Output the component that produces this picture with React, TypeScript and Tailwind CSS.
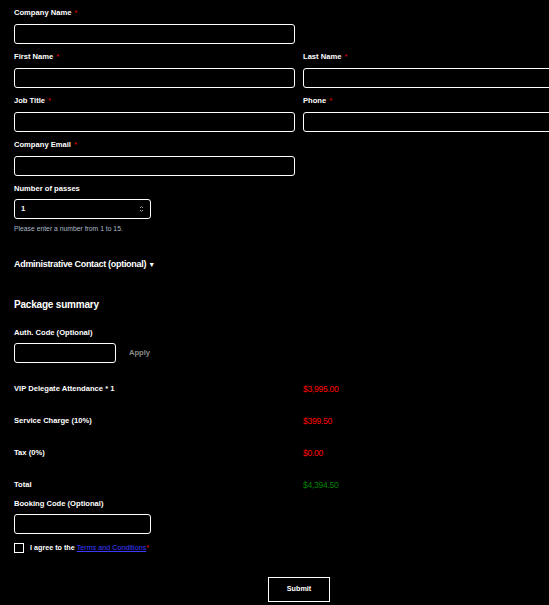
import React from 'react';

const font = { fontFamily: '"Liberation Sans", Arial, sans-serif' };

const Label: React.FC<{ text: string; required?: boolean; className?: string }> = ({ text, required, className }) => (
  <div className={`h-[10px] leading-[10px] text-[7.6px] font-bold text-white ${className ?? 'mb-[6px]'}`}>
    {text}
    {required && <span className="ml-[3px] text-[#c00000]">*</span>}
  </div>
);

const Box: React.FC<{ className?: string; children?: React.ReactNode }> = ({ className, children }) => (
  <div className={`h-[20px] rounded-[3px] border border-white bg-black ${className ?? ''}`}>{children}</div>
);

const Field: React.FC<{ text: string; required?: boolean }> = ({ text, required }) => (
  <div className="mb-[8px]">
    <Label text={text} required={required} />
    <Box />
  </div>
);

const SummaryRow: React.FC<{ name: string; price: string; green?: boolean; last?: boolean }> = ({ name, price, green, last }) => (
  <div className={`grid grid-cols-[281px_281px] gap-x-[8px] h-[10px] leading-[10px] ${last ? '' : 'mb-[22px]'}`}>
    <div className="text-[7.6px] font-bold text-white">{name}</div>
    <div className={`text-[8.6px] tracking-[-0.3px] ${green ? 'text-[#008000]' : 'text-[#ff0000]'}`}>{price}</div>
  </div>
);

const App: React.FC = () => {
  return (
    <div className="w-[549px] h-[605px] overflow-hidden bg-black" style={font}>
      <div className="w-[570px] ml-[14px] pt-[8px]">
        <div className="grid grid-cols-[281px_281px] gap-x-[8px]">
          <Field text="Company Name" required />
          <div />
          <Field text="First Name" required />
          <Field text="Last Name" required />
          <Field text="Job Title" required />
          <Field text="Phone" required />
          <Field text="Company Email" required />
          <div />
        </div>

        <Label text="Number of passes" className="mb-[5px]" />
        <Box className="w-[137px] flex items-center justify-between pl-[6px] pr-[6px]">
          <span className="text-[7.6px] font-bold text-white">1</span>
          <svg width="5" height="8" viewBox="0 0 5 8" fill="none" stroke="#9ca3af" strokeWidth="1">
            <path d="M1 3 L2.5 1.5 L4 3" />
            <path d="M1 5 L2.5 6.5 L4 5" />
          </svg>
        </Box>
        <div className="mt-[6px] h-[8px] leading-[8px] text-[6.8px] text-[#a9b8c8]">
          Please enter a number from 1 to 15.
        </div>

        <div className="mt-[25px] h-[12px] leading-[12px] text-[9px] font-bold text-white tracking-[-0.3px]">
          Administrative Contact (optional) <span className="text-[7px]">▼</span>
        </div>

        <div className="mt-[28px] h-[14px] leading-[14px] text-[10px] font-bold text-white tracking-[-0.2px]">
          Package summary
        </div>

        <Label text="Auth. Code (Optional)" className="mt-[16px] mb-[5px]" />
        <div className="flex items-center">
          <Box className="w-[102px]" />
          <span className="ml-[13px] text-[7.6px] font-bold text-[#8a8a8a]">Apply</span>
        </div>

        <div className="mt-[21px]">
          <SummaryRow name="VIP Delegate Attendance * 1" price="$3,995.00" />
          <SummaryRow name="Service Charge (10%)" price="$399.50" />
          <SummaryRow name="Tax (0%)" price="$0.00" />
          <SummaryRow name="Total" price="$4,394.50" green last />
        </div>

        <Label text="Booking Code (Optional)" className="mt-[9px] mb-[5px]" />
        <Box className="w-[137px]" />

        <div className="mt-[9px] flex items-center h-[10px]">
          <div className="w-[10px] h-[10px] border border-white bg-black" />
          <span className="ml-[6px] text-[7.2px] font-bold text-white">
            I agree to the{' '}
            <a className="text-[#3a3aff] underline font-normal">Terms and Conditions</a>
            <span className="text-[#c00000]">*</span>
          </span>
        </div>

        <div className="mt-[24px] flex justify-center">
          <button className="w-[62px] h-[25px] border border-white bg-black text-[7.2px] font-bold text-white">
            Submit
          </button>
        </div>
      </div>
    </div>
  );
};

export default App;
